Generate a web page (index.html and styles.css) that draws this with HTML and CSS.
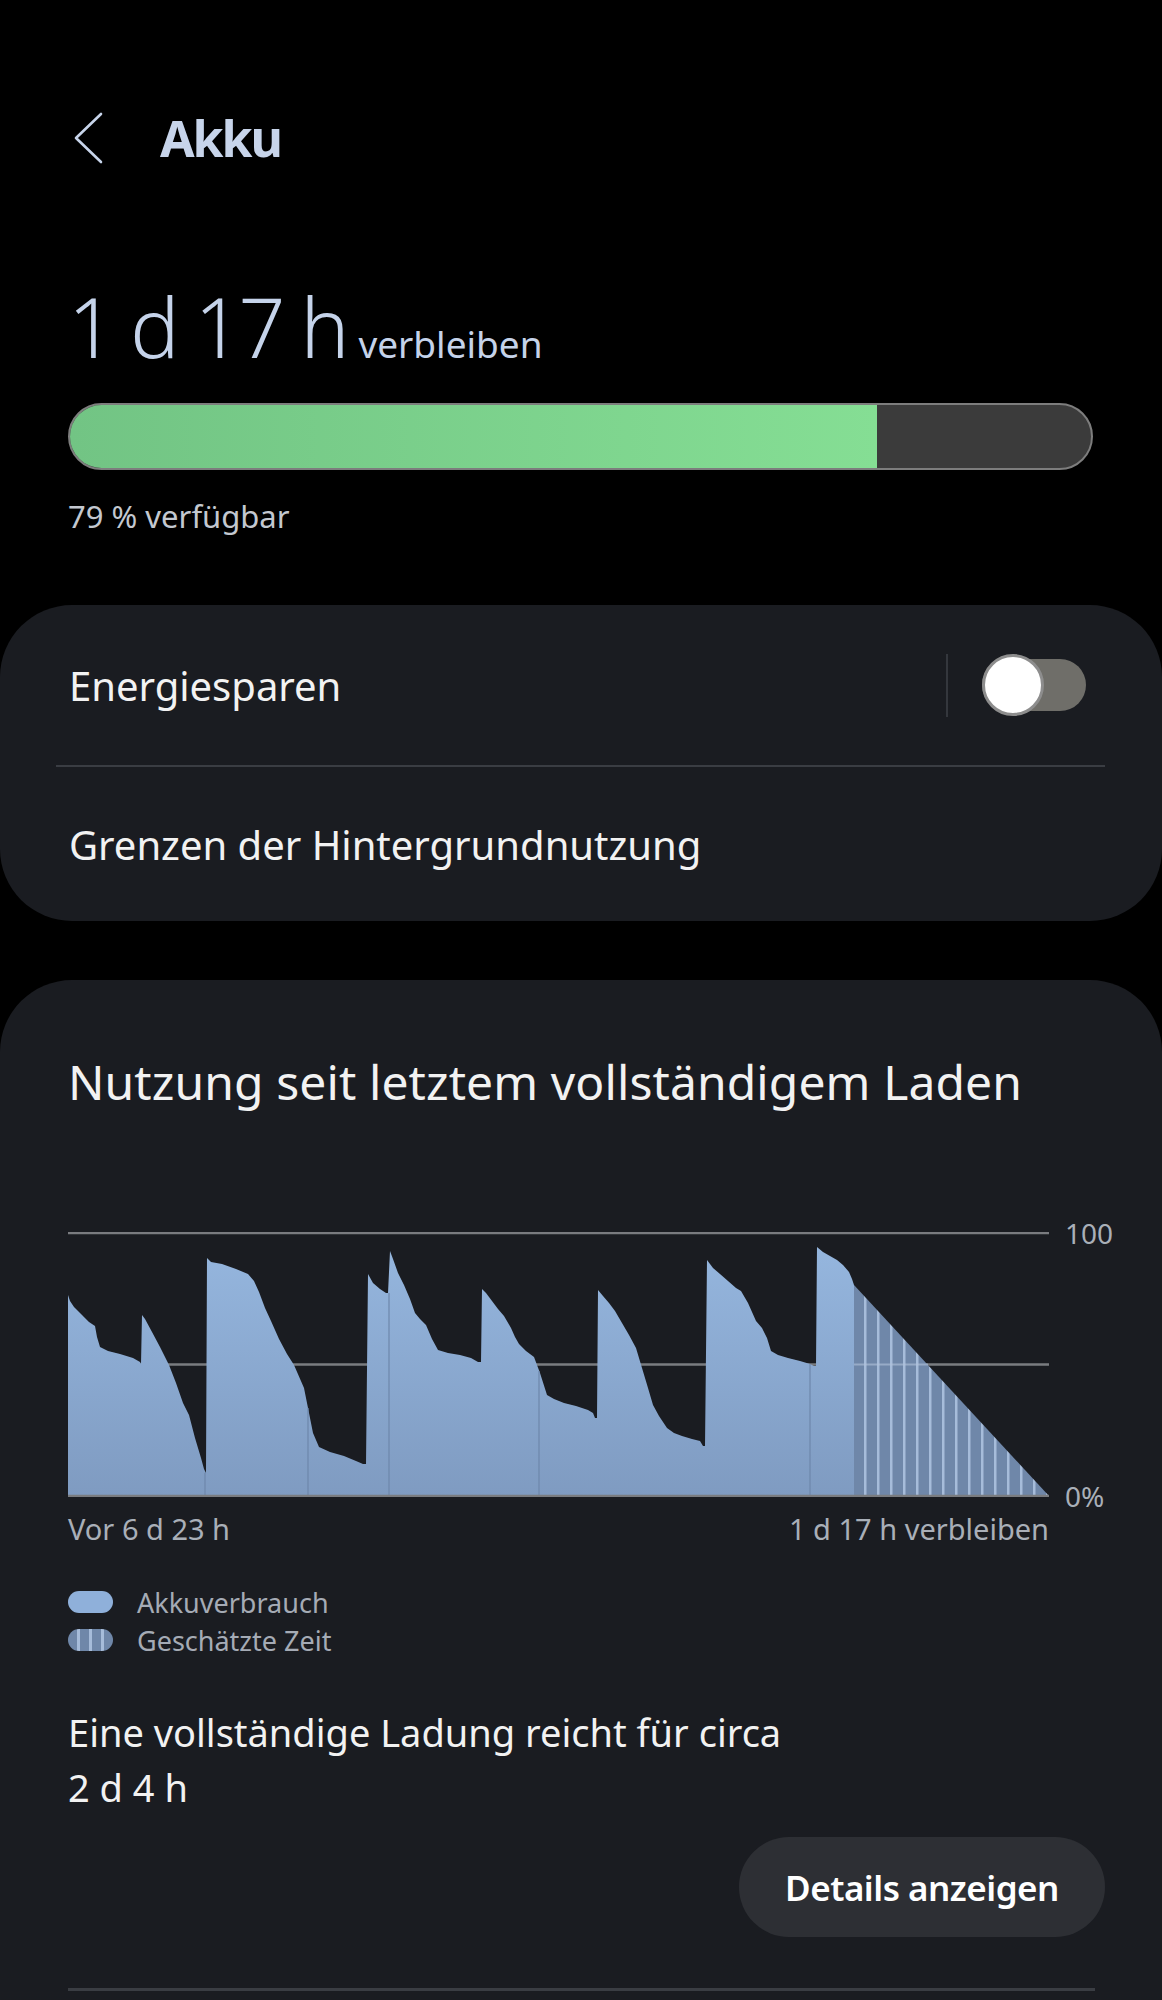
FILE: index.html
```html
<!DOCTYPE html>
<html lang="de">

<head>
    <meta charset="UTF-8">
    <meta name="viewport" content="width=device-width, initial-scale=1.0">
    <title>Akku</title>
    <link rel="stylesheet" href="styles.css">
</head>

<body>
    <header class="appbar">
        <svg class="back" width="30" height="52" viewBox="0 0 30 52">
            <polyline points="28,2 3,26 28,50" fill="none" stroke="#c7d4ea" stroke-width="2.6" stroke-linecap="round" stroke-linejoin="round" />
        </svg>
        <h1>Akku</h1>
    </header>

    <section class="summary">
        <p class="remaining"><span class="big">1 d 17 h</span><span class="suffix">verbleiben</span></p>
        <div class="battery">
            <div class="battery-fill" style="width: 79%;"></div>
        </div>
        <p class="available">79 % verfügbar</p>
    </section>

    <section class="card">
        <div class="row">
            <span class="row-label">Energiesparen</span>
            <span class="vline"></span>
            <span class="toggle"></span>
        </div>
        <div class="divider"></div>
        <div class="row row-low">
            <span class="row-label">Grenzen der Hintergrundnutzung</span>
        </div>
    </section>

    <section class="card card-usage">
        <h2>Nutzung seit letztem vollständigem Laden</h2>

        <div class="chart">
            <svg class="plot" width="981" height="265" viewBox="0 -1 981 265">
                <defs>
                    <linearGradient id="area" x1="0" y1="0" x2="0" y2="1">
                        <stop offset="0" stop-color="#95b6de" />
                        <stop offset="1" stop-color="#7f9bc1" />
                    </linearGradient>
                    <pattern id="hatch" width="13" height="10" patternUnits="userSpaceOnUse" x="786">
                        <rect width="13" height="10" fill="#6f87a9" />
                        <rect x="10" width="2.5" height="10" fill="#a6bcda" />
                    </pattern>
                </defs>
                <line x1="0" y1="0" x2="981" y2="0" stroke="#7a7c80" stroke-width="2.4" />
                <line x1="0" y1="131.5" x2="981" y2="131.5" stroke="#7a7c80" stroke-width="2.4" />
                <path fill="url(#area)" d="M0,263 L0,62 L2,68 L6,74 L14,82 L21,89 L27,93 L29,104 L32,114 L40,118 L52,121 L65,125 L72,129 L73,131 L74,82 L77,86 L84,99 L92,114 L101,132 L108,150 L115,170 L121,182 L127,205 L133,225 L136,236 L138,240 L139,25 L143,29 L154,31 L168,36 L180,41 L186,48 L191,59 L197,75 L203,88 L211,106 L219,121 L226,132 L236,155 L240,175 L245,200 L251,214 L262,219 L276,223 L288,228 L295,231 L298,231 L300,41 L305,50 L312,56 L318,60 L320,60 L322,18 L325,26 L330,40 L336,52 L342,66 L347,80 L352,86 L358,92 L364,106 L370,117 L380,120 L392,122 L403,125 L410,129 L413,129 L414,56 L418,60 L424,68 L430,76 L436,83 L443,95 L447,104 L451,111 L458,118 L466,124 L472,140 L479,162 L486,166 L496,170 L508,173 L520,177 L525,180 L527,185 L529,185 L530,57 L535,63 L541,70 L547,78 L554,90 L561,102 L568,115 L574,135 L580,155 L585,172 L591,183 L599,195 L606,200 L614,203 L624,206 L632,208 L635,213 L637,213 L639,27 L645,35 L652,41 L660,48 L668,55 L673,58 L680,70 L688,88 L694,95 L699,105 L703,118 L710,122 L720,125 L732,128 L742,131 L746,133 L748,133 L749,14 L755,19 L762,23 L769,27 L775,32 L781,39 L784,46 L786,52 L786,263 Z" />
                <path fill="url(#hatch)" d="M786,52 L981,263 L786,263 Z" />
                <line x1="786" y1="131.5" x2="860" y2="131.5" stroke="#b3c4dc" stroke-width="2" opacity="0.6" />
                <g stroke="#6d87ab" stroke-width="1.2">
                    <line x1="137" y1="240" x2="137" y2="263" />
                    <line x1="240" y1="175" x2="240" y2="263" />
                    <line x1="321" y1="60" x2="321" y2="263" />
                    <line x1="471" y1="138" x2="471" y2="263" />
                    <line x1="742" y1="131" x2="742" y2="263" />
                </g>
                <line x1="0" y1="263" x2="981" y2="263" stroke="#7a7c80" stroke-width="2.4" />
            </svg>
            <div class="scale">
                <span>100</span>
                <span>0%</span>
            </div>
        </div>

        <div class="axis">
            <span>Vor 6 d 23 h</span>
            <span>1 d 17 h verbleiben</span>
        </div>

        <ul class="legend">
            <li><span class="swatch"></span>Akkuverbrauch</li>
            <li><span class="swatch swatch-est"></span>Geschätzte Zeit</li>
        </ul>

        <p class="estimate">Eine vollständige Ladung reicht für circa<br>2 d 4 h</p>

        <div class="actions">
            <button type="button">Details anzeigen</button>
        </div>

        <div class="divider divider-bottom"></div>
    </section>
</body>

</html>
```

FILE: styles.css
```css
body {
    margin: 0;
    background-color: #000;
    font-family: "Noto Sans", "Open Sans", sans-serif;
    color: #f2f2f2;
}

p,
h1,
h2,
ul {
    margin: 0;
    padding: 0;
}

.appbar {
    display: flex;
    align-items: center;
    gap: 57px;
    height: 60px;
    padding: 108px 0 0 73px;
}

.appbar h1 {
    font-size: 50px;
    line-height: 60px;
    font-weight: bold;
    letter-spacing: -2px;
    color: #c7d4ea;
}

.summary {
    padding: 0 69px 0 68px;
    margin-top: 113px;
}

.remaining {
    height: 90px;
    line-height: 90px;
    color: #c5d3ea;
}

.big {
    font-size: 82px;
    font-weight: 300;
    letter-spacing: -3px;
}

.suffix {
    font-size: 37px;
    line-height: 1;
    margin-left: 12px;
}

.battery {
    margin-top: 32px;
    height: 63px;
    border: 2px solid #7d7d7d;
    border-radius: 40px;
    background-color: #3b3b3b;
    overflow: hidden;
}

.battery-fill {
    height: 100%;
    background: linear-gradient(90deg, #72c484, #85de94);
}

.available {
    margin-top: 26px;
    font-size: 31px;
    line-height: 40px;
    color: #c3c8d0;
}

.card {
    margin-top: 69px;
    background-color: #1a1c21;
    border-radius: 72px;
}

.row {
    display: flex;
    align-items: center;
    height: 160px;
    padding: 0 76px 0 69px;
}

.row-low {
    height: 154px;
}

.row-label {
    flex: 1;
    font-size: 40px;
}

.vline {
    width: 2px;
    height: 63px;
    background-color: #34373d;
    margin-right: 34px;
}

.toggle {
    position: relative;
    width: 104px;
    height: 52px;
    border-radius: 26px;
    background-color: #6f6e69;
}

.toggle::after {
    content: "";
    position: absolute;
    left: 0;
    top: -5px;
    width: 56px;
    height: 56px;
    border: 3px solid #8d8d8d;
    border-radius: 50%;
    background-color: #fff;
}

.divider {
    height: 2px;
    margin: 0 57px 0 56px;
    background-color: #3a3d43;
}

.card-usage {
    margin-top: 59px;
    padding: 72px 57px 12px 68px;
    border-radius: 72px 72px 0 0;
}

.card-usage h2 {
    font-size: 48px;
    line-height: 60px;
    font-weight: normal;
    letter-spacing: 0.1px;
}

.chart {
    display: flex;
    margin-top: 120px;
}

.plot {
    display: block;
    flex-shrink: 0;
}

.scale {
    display: flex;
    flex-direction: column;
    justify-content: space-between;
    margin: -19px 0 -19px 16px;
    font-size: 28px;
    line-height: 40px;
    color: #a9afb8;
}

.axis {
    display: flex;
    justify-content: space-between;
    width: 981px;
    margin-top: 12px;
    font-size: 29px;
    line-height: 40px;
    color: #a9afb8;
}

.legend {
    list-style: none;
    margin-top: 34px;
}

.legend li {
    display: flex;
    align-items: center;
    height: 38px;
    font-size: 27px;
    color: #a5abb5;
}

.swatch {
    width: 45px;
    height: 22px;
    margin-right: 24px;
    border-radius: 11px;
    background-color: #8fb0da;
}

.swatch-est {
    background: repeating-linear-gradient(90deg, #6f87a9 0 9px, #a6bcda 9px 12px);
}

.estimate {
    margin-top: 46px;
    font-size: 38px;
    line-height: 55px;
}

.actions {
    display: flex;
    justify-content: flex-end;
    margin-top: 22px;
}

button {
    width: 366px;
    height: 100px;
    border: none;
    border-radius: 50px;
    background-color: #2d2f34;
    color: #fff;
    font-family: inherit;
    font-size: 35px;
    font-weight: 600;
    letter-spacing: -0.5px;
    cursor: pointer;
}

.divider-bottom {
    height: 3px;
    margin: 51px 10px 0 0;
}
```
